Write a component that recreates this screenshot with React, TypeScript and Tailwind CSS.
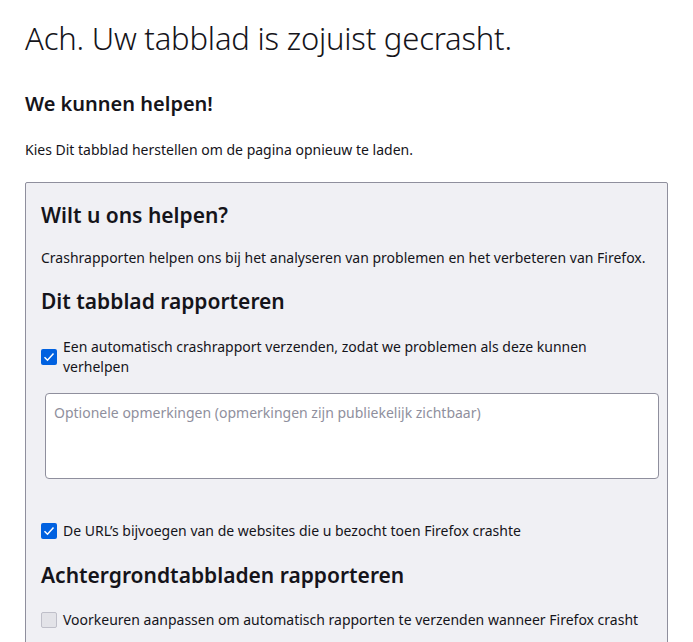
export default function App() {
  return (
    <div className="min-h-screen bg-white text-[#15141a] px-[25px] pt-[16px]" style={{ fontFamily: '"Noto Sans", "Open Sans", sans-serif' }}>
      <h1 className="text-[31px] font-light leading-[44px] tracking-[-0.2px]">Ach. Uw tabblad is zojuist gecrasht.</h1>
      <h2 className="mt-[30px] text-[20px] font-semibold leading-[28px]">We kunnen helpen!</h2>
      <p className="mt-[22px] text-[14px] leading-[20px]">Kies Dit tabblad herstellen om de pagina opnieuw te laden.</p>
      <div className="mt-[22px] w-[643px] border border-[#8f8f9d] rounded-[2px] bg-[#f0f0f4] px-[15px] pt-[16px] pb-[14px]">
        <h3 className="text-[21px] font-semibold leading-[32px]">Wilt u ons helpen?</h3>
        <p className="mt-[17px] text-[14px] leading-[20px]">Crashrapporten helpen ons bij het analyseren van problemen en het verbeteren van Firefox.</p>
        <h3 className="mt-[17px] text-[21px] font-semibold leading-[32px]">Dit tabblad rapporteren</h3>
        <label className="mt-[20px] flex items-center gap-[6px] text-[14px] leading-[20px]">
          <Box checked />
          Een automatisch crashrapport verzenden, zodat we problemen als deze kunnen verhelpen
        </label>
        <div className="mt-[16px] ml-[4px] h-[86px] w-[614px] bg-white border border-[#8f8f9d] rounded-[4px] px-[8px] py-[8px] text-[14px] text-[#8f8f9d]">
          Optionele opmerkingen (opmerkingen zijn publiekelijk zichtbaar)
        </div>
        <label className="mt-[42px] flex items-center gap-[6px] text-[14px] leading-[20px]">
          <Box checked />
          De URL’s bijvoegen van de websites die u bezocht toen Firefox crashte
        </label>
        <h3 className="mt-[18px] text-[21px] font-semibold leading-[32px]">Achtergrondtabbladen rapporteren</h3>
        <label className="mt-[19px] flex items-center gap-[6px] text-[14px] leading-[20px]">
          <Box />
          Voorkeuren aanpassen om automatisch rapporten te verzenden wanneer Firefox crasht
        </label>
      </div>
    </div>
  );
}

function Box({ checked }: { checked?: boolean }) {
  return checked ? (
    <span className="w-[16px] h-[16px] rounded-[2px] bg-[#0061e0] flex items-center justify-center shrink-0">
      <svg width="12" height="12" viewBox="0 0 12 12" fill="none" stroke="white" strokeWidth="1.5">
        <path d="M1.5 6.2 4.5 9.2 10.5 2.5" />
      </svg>
    </span>
  ) : (
    <span className="w-[16px] h-[16px] rounded-[2px] bg-[#e3e3e8] border border-[#bfbfc9] shrink-0" />
  );
}
